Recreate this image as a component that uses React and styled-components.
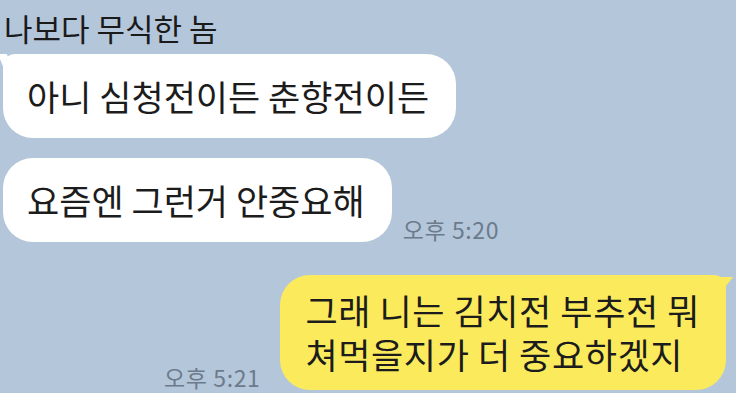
import React from "react";
import styled, { createGlobalStyle } from "styled-components";

const GlobalStyle = createGlobalStyle`
  html, body {
    margin: 0;
    padding: 0;
    background: #b4c6da;
    overflow: hidden;
  }
  body {
    font-family: "Noto Sans CJK KR", "Noto Sans", sans-serif;
    color: #1c1c1c;
  }
`;

const messages = [
  { id: 1, mine: false, tail: true, text: ["아니 심청전이든 춘향전이든"] },
  { id: 2, mine: false, tail: false, text: ["요즘엔 그런거 안중요해"], time: "오후 5:20" },
  {
    id: 3,
    mine: true,
    tail: true,
    text: ["그래 니는 김치전 부추전 뭐", "쳐먹을지가 더 중요하겠지"],
    time: "오후 5:21",
  },
];

const ChatRoom = () => {
  return (
    <S.Page>
      <S.Sender>나보다 무식한 놈</S.Sender>
      {messages.map((m) => (
        <S.Row key={m.id} $mine={m.mine}>
          <S.Bubble $mine={m.mine} $tail={m.tail} $lines={m.text.length}>
            {m.text.map((line, i) => (
              <S.Line key={i}>{line}</S.Line>
            ))}
          </S.Bubble>
          {m.time && <S.Time>{m.time}</S.Time>}
        </S.Row>
      ))}
    </S.Page>
  );
};

export default function App() {
  return (
    <>
      <GlobalStyle />
      <ChatRoom />
    </>
  );
}

const S = {
  Page: styled.div`
    width: 736px;
    height: 393px;
    box-sizing: border-box;
    padding: 8px 10px 0 3px;
    display: flex;
    flex-direction: column;
  `,
  Sender: styled.div`
    font-size: 31px;
    line-height: 40px;
    margin: 0 0 6px 1px;
    color: #1a1a1a;
  `,
  Row: styled.div`
    display: flex;
    align-items: flex-end;
    gap: ${(p) => (p.$mine ? "20px" : "11px")};
    flex-direction: ${(p) => (p.$mine ? "row-reverse" : "row")};
    margin-bottom: 20px;
    &:nth-of-type(3) {
      margin-bottom: 33px;
    }
  `,
  Bubble: styled.div`
    position: relative;
    background: ${(p) => (p.$mine ? "#fbeb5c" : "#ffffff")};
    border-radius: 30px;
    padding: ${(p) => (p.$lines > 1 ? "13px 26px 14px 25px" : "20px 27px 20px 24px")};
    font-size: 35px;
    line-height: 44px;
    letter-spacing: ${(p) => (p.$mine ? "0.6px" : "0")};
    color: #1c1c1c;
    white-space: nowrap;
    ${(p) =>
      p.$tail &&
      (p.$mine
        ? `
      border-top-right-radius: 12px;
      &::before {
        content: "";
        position: absolute;
        top: 2px;
        right: -7px;
        width: 18px;
        height: 16px;
        background: #fbeb5c;
        clip-path: polygon(0 0, 100% 0, 30% 100%, 0 100%);
      }
    `
        : `
      border-top-left-radius: 12px;
      &::before {
        content: "";
        position: absolute;
        top: 0;
        left: -5px;
        width: 16px;
        height: 16px;
        background: #ffffff;
        clip-path: polygon(0 0, 55% 0, 100% 100%, 40% 100%);
      }
    `)}
  `,
  Line: styled.div``,
  Time: styled.span`
    font-size: 23px;
    line-height: 24px;
    letter-spacing: 0.6px;
    color: #6c7b8c;
    margin-bottom: 1px;
    white-space: nowrap;
  `,
};
